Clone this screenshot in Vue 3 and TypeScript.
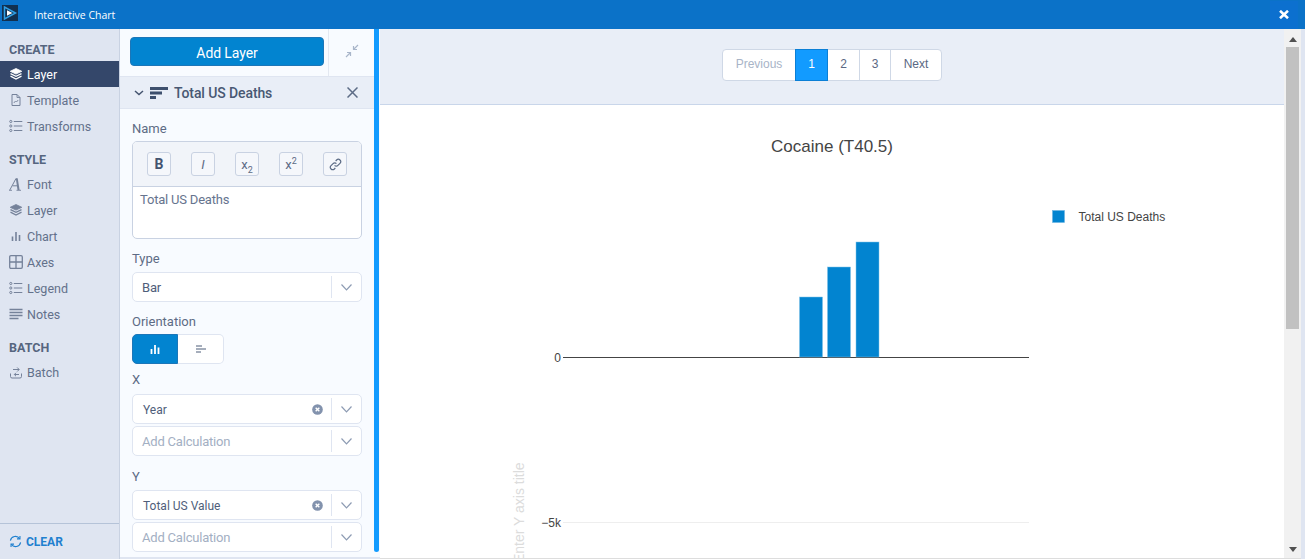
<script setup lang="ts">
const sections = [
  {
    title: 'CREATE',
    items: [
      { label: 'Layer', icon: 'layers', active: true },
      { label: 'Template', icon: 'file' },
      { label: 'Transforms', icon: 'list' },
    ],
  },
  {
    title: 'STYLE',
    items: [
      { label: 'Font', icon: 'font' },
      { label: 'Layer', icon: 'layers' },
      { label: 'Chart', icon: 'bars' },
      { label: 'Axes', icon: 'grid' },
      { label: 'Legend', icon: 'list' },
      { label: 'Notes', icon: 'notes' },
    ],
  },
  {
    title: 'BATCH',
    items: [{ label: 'Batch', icon: 'batch' }],
  },
];

const pages = ['1', '2', '3'];

const bars = [
  { x: 799.5, y: 297, h: 60 },
  { x: 827.5, y: 267, h: 90 },
  { x: 856, y: 242, h: 115 },
];
</script>

<template>
  <div class="app">
    <header class="topbar">
      <div class="logo">
        <svg width="16" height="16" viewBox="0 0 16 16">
          <rect width="16" height="16" fill="#12304f" />
          <path d="M2.500 2v12l11-6z" fill="none" stroke="#2f9fe6" stroke-width="1.500" />
          <path d="M5 5.200v5.600L10.400 8z" fill="#fff" />
        </svg>
      </div>
      <span class="app-title">Interactive Chart</span>
      <button type="button" class="close-app">
        <svg width="10" height="9" viewBox="0 0 10 9">
          <path d="M1 0.800l8 7.400M9 0.800l-8 7.400" stroke="#fff" stroke-width="2.600" />
        </svg>
      </button>
    </header>

    <div class="body">
      <aside class="sidebar">
        <nav class="nav">
          <section v-for="s in sections" :key="s.title" class="nav-section">
            <h4>{{ s.title }}</h4>
            <a
              v-for="item in s.items"
              :key="s.title + item.label"
              class="nav-item"
              :class="{ active: item.active }"
            >
              <svg class="nav-icon" width="14" height="14" viewBox="0 0 14 14" fill="none" stroke="currentColor">
                <template v-if="item.icon === 'layers'">
                  <path d="M7 1.500l5.800 2.800L7 7.100 1.200 4.300z" fill="currentColor" stroke-width="0.800" />
                  <path d="M1.500 6.600L7 9.300l5.500-2.700M1.500 9.200L7 12l5.500-2.800" stroke-width="1.300" />
                </template>
                <template v-else-if="item.icon === 'file'">
                  <path d="M3 1.500h5l3 3v8H3z" />
                  <path d="M4.800 10l1.700-2 1 1 1.700-2M8 1.500v3h3" stroke-width="0.900" />
                </template>
                <template v-else-if="item.icon === 'list'">
                  <circle cx="1.800" cy="2.500" r="1.100" />
                  <circle cx="1.800" cy="7" r="1.100" />
                  <circle cx="1.800" cy="11.500" r="1.100" />
                  <path d="M4.800 2.500h8.500M4.800 7h8.500M4.800 11.500h8.500" stroke-width="1.100" />
                </template>
                <template v-else-if="item.icon === 'font'">
                  <path d="M0.800 13L7 1.500M3.500 8.800h5.500" stroke-width="1" />
                  <path d="M6.800 1.200h1.900L10.600 13H8.500z" fill="currentColor" stroke="none" />
                  <path d="M0 13.300h3M7.500 13.300h4.500" stroke-width="0.900" />
                </template>
                <template v-else-if="item.icon === 'bars'">
                  <path d="M3.500 7.500V12M7 3v9M10.500 6v6" stroke-width="1.600" />
                </template>
                <template v-else-if="item.icon === 'grid'">
                  <rect x="0.700" y="0.700" width="12.600" height="12.600" rx="1.200" stroke-width="1.300" />
                  <path d="M7 1v12M1 7h12" stroke-width="1.300" />
                </template>
                <template v-else-if="item.icon === 'notes'">
                  <path d="M0.500 2.500h13M0.500 5.500h13M0.500 8.500h13M0.500 11.500h9" stroke-width="1.300" />
                </template>
                <template v-else>
                  <path d="M1.500 8.500v3a1.500 1.500 0 0 0 1.500 1.500h8a1.500 1.500 0 0 0 1.500-1.500v-3" />
                  <path d="M4 4.500h6M8.200 2.500l2 2-2 2M10 9.500H5.500M7 7.800L5.300 9.500 7 11.200" stroke-width="1" />
                </template>
              </svg>
              <span>{{ item.label }}</span>
            </a>
          </section>
        </nav>
        <div class="clear">
          <svg width="13" height="13" viewBox="0 0 14 14" fill="none" stroke="#1f80cf" stroke-width="1.200">
            <path d="M1.500 6a5.500 5.500 0 0 1 10-2M12.500 8a5.500 5.500 0 0 1-10 2" />
            <path d="M11.800 1v3.200H8.600M2.200 13V9.800h3.200" />
          </svg>
          <span>CLEAR</span>
        </div>
      </aside>

      <section class="panel">
        <div class="add-row">
          <div class="add-cell">
            <button type="button" class="add-btn">Add Layer</button>
          </div>
          <div class="collapse-cell">
            <svg width="14" height="14" viewBox="0 0 14 14" fill="none" stroke="#a9b6ca" stroke-width="1.200">
              <path d="M13 1L8.500 5.500M8.500 2v3.500H12M1 13l4.500-4.500M5.500 12V8.500H2" />
            </svg>
          </div>
        </div>

        <div class="layer-head">
          <svg width="10" height="6" viewBox="0 0 10 6" fill="none" stroke="#44546f" stroke-width="1.500">
            <path d="M1 1l4 3.500L9 1" />
          </svg>
          <svg class="layer-glyph" width="18" height="12" viewBox="0 0 18 12" fill="#3d4f6d">
            <rect width="18" height="3" />
            <rect y="4.500" width="12" height="3" />
            <rect y="9" width="6" height="3" />
          </svg>
          <span class="layer-name">Total US Deaths</span>
          <svg class="layer-x" width="11" height="11" viewBox="0 0 11 11" stroke="#5d6c86" stroke-width="1.500">
            <path d="M0.500 0.500l10 10M10.500 0.500l-10 10" />
          </svg>
        </div>

        <div class="form">
          <label class="field-label first">Name</label>
          <div class="editor">
            <div class="editor-tools">
              <button type="button" class="tool bold">B</button>
              <button type="button" class="tool italic">I</button>
              <button type="button" class="tool"><span>x<sub>2</sub></span></button>
              <button type="button" class="tool"><span>x<sup>2</sup></span></button>
              <button type="button" class="tool">
                <svg width="13" height="13" viewBox="0 0 14 14" fill="none" stroke="#5d6c86" stroke-width="1.300">
                  <path d="M6 8a2.500 2.500 0 0 0 3.600 0l2.200-2.200a2.500 2.500 0 0 0-3.600-3.600L7.200 3.200" />
                  <path d="M8 6a2.500 2.500 0 0 0-3.600 0L2.200 8.200a2.500 2.500 0 0 0 3.600 3.600l1-1" />
                </svg>
              </button>
            </div>
            <div class="editor-text">Total US Deaths</div>
          </div>

          <label class="field-label type-label">Type</label>
          <div class="select"><span class="text">Bar</span><i class="sep"></i><svg class="chev" width="11" height="7" viewBox="0 0 11 7" fill="none" stroke="#8d9bb3" stroke-width="1.200"><path d="M0.500 0.500L5.500 5.800l5-5.300" /></svg></div>

          <label class="field-label orient-label">Orientation</label>
          <div class="toggle">
            <button type="button" class="toggle-btn on">
              <svg width="10" height="10" viewBox="0 0 10 10" stroke="#fff" stroke-width="1.800"><path d="M1.500 5v5M5 1v9M8.500 3.500V10" /></svg>
            </button>
            <button type="button" class="toggle-btn">
              <svg width="10" height="10" viewBox="0 0 10 10" stroke="#4c5c78" stroke-width="1"><path d="M0 2h6M0 5h10M0 8h5" /></svg>
            </button>
          </div>

          <label class="field-label axis-x">X</label>
          <div class="select">
            <span class="value">Year</span>
            <svg class="clear-x" width="11" height="11" viewBox="0 0 12 12"><circle cx="6" cy="6" r="5.800" fill="#8292ad" /><path d="M4 4l4 4M8 4l-4 4" stroke="#fff" stroke-width="1.500" /></svg>
            <i class="sep"></i><svg class="chev" width="11" height="7" viewBox="0 0 11 7" fill="none" stroke="#8d9bb3" stroke-width="1.200"><path d="M0.500 0.500L5.500 5.800l5-5.300" /></svg>
          </div>
          <div class="select stacked">
            <span class="text placeholder">Add Calculation</span>
            <i class="sep"></i><svg class="chev" width="11" height="7" viewBox="0 0 11 7" fill="none" stroke="#8d9bb3" stroke-width="1.200"><path d="M0.500 0.500L5.500 5.800l5-5.300" /></svg>
          </div>

          <label class="field-label axis-y">Y</label>
          <div class="select">
            <span class="value">Total US Value</span>
            <svg class="clear-x" width="11" height="11" viewBox="0 0 12 12"><circle cx="6" cy="6" r="5.800" fill="#8292ad" /><path d="M4 4l4 4M8 4l-4 4" stroke="#fff" stroke-width="1.500" /></svg>
            <i class="sep"></i><svg class="chev" width="11" height="7" viewBox="0 0 11 7" fill="none" stroke="#8d9bb3" stroke-width="1.200"><path d="M0.500 0.500L5.500 5.800l5-5.300" /></svg>
          </div>
          <div class="select stacked">
            <span class="text placeholder">Add Calculation</span>
            <i class="sep"></i><svg class="chev" width="11" height="7" viewBox="0 0 11 7" fill="none" stroke="#8d9bb3" stroke-width="1.200"><path d="M0.500 0.500L5.500 5.800l5-5.300" /></svg>
          </div>
        </div>
        <div class="panel-scroll"></div>
      </section>

      <main class="main">
        <div class="pager-band">
          <div class="pager">
            <a class="page prev">Previous</a>
            <a
              v-for="(p, i) in pages"
              :key="p"
              class="page num"
              :class="{ current: i === 0 }"
            >{{ p }}</a>
            <a class="page next">Next</a>
          </div>
        </div>
        <div class="chart">
          <svg class="plot" width="904" height="453" viewBox="380 105 904 453">
            <text x="832" y="152" text-anchor="middle" class="plot-title">Cocaine (T40.5)</text>
            <rect x="1052.500" y="210.500" width="12" height="12" fill="#0284d0" stroke="#6cb5e3" stroke-width="0.600" />
            <text x="1078.500" y="221" class="tick">Total US Deaths</text>
            <line x1="563" x2="1029" y1="357.500" y2="357.500" stroke="#444" />
            <line x1="563" x2="1029" y1="522.500" y2="522.500" stroke="#eee" />
            <rect
              v-for="b in bars"
              :key="b.x"
              :x="b.x"
              :y="b.y"
              width="23"
              :height="b.h"
              fill="#0284d0"
              stroke="#7fc1e8"
              stroke-width="0.500"
            />
            <text x="561" y="361.500" text-anchor="end" class="tick">0</text>
            <text x="561" y="526.500" text-anchor="end" class="tick">−5k</text>
            <text transform="translate(524 563) rotate(-90)" class="axis-title">Enter Y axis title</text>
          </svg>
        </div>
      </main>

      <div class="page-scroll">
        <div class="arrow"></div>
        <div class="thumb"></div>
        <div class="arrow down"></div>
      </div>
      <div class="edge-strip"></div>
    </div>
  </div>
</template>

<style scoped>
.app {
  display: flex;
  flex-direction: column;
  height: 559px;
  overflow: hidden;
  font-family: Roboto, "Liberation Sans", sans-serif;
  color: #5a6883;
  background: #fff;
}
.topbar {
  display: flex;
  align-items: center;
  flex: 0 0 29px;
  background: #0b72c8;
  color: #fff;
}
.logo {
  display: flex;
  align-self: flex-start;
  margin: 5px 0 0 2px;
}
.app-title {
  margin-left: 16px;
  font-size: 10.500px;
  font-family: "Open Sans", sans-serif;
}
.close-app {
  display: flex;
  align-items: center;
  justify-content: center;
  width: 28px;
  height: 28px;
  margin-left: auto;
  margin-right: 7px;
  padding: 0;
  border: none;
  background: #0c70cf;
}
.body {
  display: flex;
  flex: 1;
  min-height: 0;
}
.sidebar {
  display: flex;
  flex-direction: column;
  flex: 0 0 120px;
  box-sizing: border-box;
  background: #dfe5f1;
  border-right: 1px solid #c9d2e2;
}
.nav {
  flex: 1;
  padding-top: 13px;
}
.nav-section {
  margin-bottom: 13px;
}
.nav-section h4 {
  margin: 0 0 4px;
  padding-left: 9px;
  font-size: 12.500px;
  line-height: 15px;
  font-weight: 700;
  color: #56657f;
}
.nav-item {
  display: flex;
  align-items: center;
  height: 26px;
  padding-left: 9px;
  font-size: 12.500px;
  color: #63718b;
}
.nav-item.active {
  background: #34476a;
  color: #fff;
}
.nav-icon {
  flex: none;
  margin-right: 4px;
  opacity: 0.85;
}
.nav-item.active .nav-icon {
  opacity: 1;
}
.clear {
  display: flex;
  align-items: center;
  gap: 4px;
  height: 35px;
  padding-left: 9px;
  border-top: 1px solid #b5c3d8;
  font-size: 12px;
  font-weight: 700;
  color: #1f80cf;
}
.panel {
  position: relative;
  flex: 0 0 260px;
  box-sizing: border-box;
  padding-right: 6px;
  background: #f8fbff;
  border-bottom: 2px solid #dfe5f1;
}
.add-row {
  display: flex;
  height: 47px;
  border-bottom: 1px solid #dfe5f1;
}
.add-cell {
  flex: 1;
  padding: 8px 4px 0 10px;
}
.add-btn {
  display: block;
  width: 100%;
  height: 29px;
  padding: 2px 0 0;
  border: 1px solid #1c76b8;
  border-radius: 4px;
  background: #0284d0;
  color: #fff;
  font: 400 14px Roboto, sans-serif;
  letter-spacing: -0.1px;
}
.collapse-cell {
  display: flex;
  flex: 0 0 45px;
  align-items: center;
  justify-content: center;
  border-left: 1px solid #e3e8f1;
  padding-bottom: 3px;
}
.layer-head {
  display: flex;
  align-items: center;
  height: 32px;
  box-sizing: border-box;
  padding-left: 14px;
  background: #e9eef7;
  border-bottom: 1px solid #dfe5f1;
}
.layer-glyph {
  margin-left: 6px;
}
.layer-name {
  margin-left: 6px;
  font-size: 14px;
  font-weight: 500;
  letter-spacing: -0.1px;
  color: #485873;
}
.layer-x {
  margin-left: auto;
  margin-right: 16px;
}
.form {
  padding: 0 12px;
}
.field-label {
  display: block;
  font-size: 13px;
  line-height: 15px;
  color: #5d6b85;
}
.first {
  margin-top: 12px;
  margin-bottom: 5px;
}
.type-label {
  margin-top: 12px;
  margin-bottom: 6px;
}
.orient-label {
  margin-top: 12px;
  margin-bottom: 5px;
}
.axis-x {
  margin-top: 8px;
  margin-bottom: 7px;
}
.axis-y {
  margin-top: 13px;
  margin-bottom: 6px;
}
.editor {
  height: 98px;
  box-sizing: border-box;
  border: 1px solid #c9d2e2;
  border-radius: 5px;
  overflow: hidden;
  background: #fff;
}
.editor-tools {
  display: flex;
  justify-content: space-between;
  height: 45px;
  box-sizing: border-box;
  padding: 10px 14px 0;
  background: #f1f4f9;
  border-bottom: 1px solid #c9d2e2;
}
.tool {
  display: flex;
  align-items: center;
  justify-content: center;
  width: 24px;
  height: 24px;
  padding: 0;
  border: 1px solid #c9d2e2;
  border-radius: 3px;
  background: #f5f7fb;
  color: #5d6b85;
  font: 400 13px Roboto, sans-serif;
}
.tool sub,
.tool sup {
  font-size: 9px;
  line-height: 0;
}
.tool.bold {
  font-size: 14px;
  font-weight: 700;
  color: #44546f;
}
.tool.italic {
  font-style: italic;
}
.editor-text {
  padding: 5px 7px;
  font-size: 13px;
  line-height: 15px;
  letter-spacing: -0.2px;
  color: #66748e;
}
.select {
  display: flex;
  align-items: center;
  height: 30px;
  box-sizing: border-box;
  padding-left: 10px;
  border: 1px solid #dfe5f1;
  border-radius: 5px;
  background: #fff;
  font-size: 13px;
  color: #4f5e7a;
}
.select.stacked {
  margin-top: 2px;
}
.text {
  margin-left: -1px;
  letter-spacing: -0.2px;
}
.value {
  padding-top: 1px;
  font-size: 12px;
}
.placeholder {
  color: #a3afc3;
}
.clear-x {
  margin-left: auto;
  margin-right: 8px;
}
.sep {
  width: 1px;
  height: 22px;
  margin-left: auto;
  background: #dfe5f1;
}
.clear-x + .sep {
  margin-left: 0;
}
.chev {
  margin: 0 9px;
}
.toggle {
  display: flex;
  width: 92px;
  height: 30px;
}
.toggle-btn {
  flex: 0 0 46px;
  display: flex;
  align-items: center;
  justify-content: center;
  padding: 0;
  border: 1px solid #dfe5f1;
  border-left: none;
  border-radius: 0 5px 5px 0;
  background: #fff;
}
.toggle-btn.on {
  border: 1px solid #1c76b8;
  border-radius: 5px 0 0 5px;
  background: #0284d0;
}
.panel-scroll {
  position: absolute;
  top: 0;
  right: 1px;
  bottom: 5px;
  width: 5px;
  border-radius: 0 0 3px 3px;
  background: #129bff;
}
.main {
  display: flex;
  flex-direction: column;
  flex: 1;
  min-width: 0;
  border-bottom: 1px solid #ddd;
}
.pager-band {
  display: flex;
  justify-content: center;
  flex: 0 0 76px;
  box-sizing: border-box;
  padding-top: 20px;
  background: #e9eef7;
  border-bottom: 1px solid #c9d6ea;
}
.pager {
  display: flex;
  height: 32px;
  box-sizing: border-box;
  border: 1px solid #cfd8e6;
  border-radius: 4px;
  background: #fff;
  font-family: "Liberation Sans", sans-serif;
  font-size: 12px;
}
.page {
  display: flex;
  align-items: center;
  justify-content: center;
  padding-bottom: 2px;
  box-sizing: border-box;
  border-left: 1px solid #cfd8e6;
  color: #5a6883;
}
.prev {
  width: 72px;
  border-left: none;
  color: #a8b4c7;
}
.num {
  width: 31px;
}
.current {
  width: 33px;
  margin: -1px 0;
  background: #129bff;
  border: 1px solid #0b7fd6;
  color: #fff;
}
.current + .num {
  border-left: none;
}
.next {
  width: 51px;
}
.chart {
  flex: 1;
  min-height: 0;
  overflow: hidden;
  background: #fff;
}
.plot {
  display: block;
  font-family: "Liberation Sans", sans-serif;
}
.plot-title {
  font-size: 17px;
  fill: #444;
}
.tick {
  font-size: 12px;
  fill: #444;
}
.axis-title {
  font-size: 14px;
  fill: #dcdcdc;
}
.page-scroll {
  display: flex;
  flex-direction: column;
  align-items: center;
  flex: 0 0 17px;
  box-sizing: border-box;
  background: #f1f1f1;
  border-bottom: 1px solid #ddd;
}
.arrow {
  flex: none;
  width: 0;
  height: 0;
  margin: 8px 0 5px;
  border-left: 4px solid transparent;
  border-right: 4px solid transparent;
  border-bottom: 5px solid #505050;
}
.arrow.down {
  margin: auto 0 6px;
  border-bottom: none;
  border-top: 5px solid #505050;
}
.thumb {
  flex: none;
  width: 13px;
  height: 282px;
  background: #c1c1c1;
}
.edge-strip {
  flex: 0 0 4px;
  background: #dfe5f1;
}
</style>
